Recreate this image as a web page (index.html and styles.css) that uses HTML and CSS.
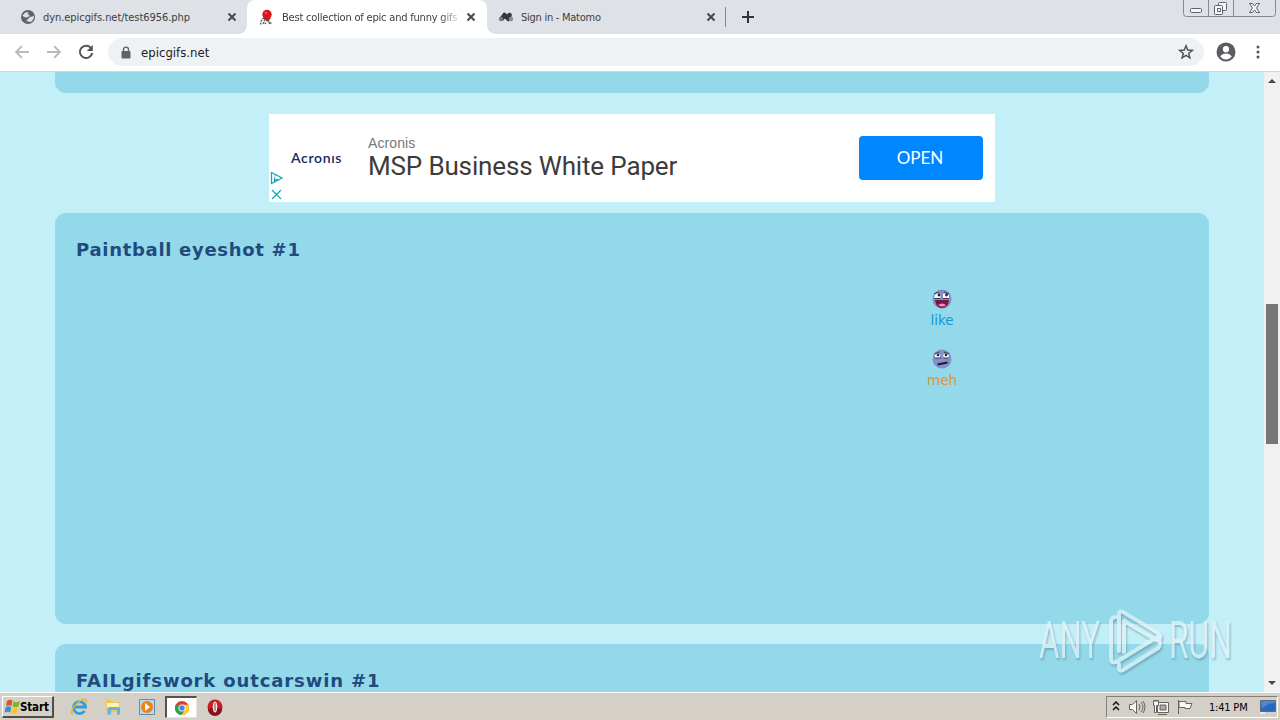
FILE: index.html
```html
<!DOCTYPE html>
<html lang="en">
<head>
  <meta charset="UTF-8">
  <title>Best collection of epic and funny gifs</title>
  <link rel="stylesheet" href="styles.css">
</head>
<body>
  <div class="screen">
    <div class="tabs">
      <div class="tab tab-first">
        <svg class="favicon" viewBox="0 0 16 16"><circle cx="8" cy="8" r="7" fill="#5f6368"/><path d="M2.500 7Q4 3 8.500 3l-1 2 2 1-1 2-3 .5zM10 8l4-1q0 4-3.500 6L6 12l2-2z" fill="#dee1e6"/></svg>
        <span class="tab-title title-php">dyn.epicgifs.net/test6956.php</span>
        <svg class="close" viewBox="0 0 10 10"><path d="M1.500 1.500l7 7M8.500 1.500l-7 7"/></svg>
      </div>
      <div class="tab active">
        <svg class="favicon" viewBox="0 0 16 16"><path d="M2.500 15.500l1-5 3-2 2 3M5 15l1.500-4 3 1 3 3.500M8 15l-2-2M10 11l3.500 4" fill="none" stroke="#586458" stroke-width="1.300" stroke-dasharray="2 1"/><circle cx="9" cy="5.500" r="4.700" fill="#d9141c"/><path d="M5 9l3-2 5 2-3 3-3-1z" fill="#b92225"/><circle cx="8" cy="4" r="1.300" fill="#f0555b"/></svg>
        <span class="tab-title title-gifs">Best collection of epic and funny gifs</span>
        <svg class="close" viewBox="0 0 10 10"><path d="M1.500 1.500l7 7M8.500 1.500l-7 7"/></svg>
      </div>
      <div class="tab tab-last">
        <svg class="favicon" viewBox="0 0 16 16"><path d="M4 9.500L6.500 6l4 4 1-4" fill="none" stroke="#33373c" stroke-width="4.500" stroke-linejoin="round" stroke-linecap="round"/><circle cx="3" cy="10" r="2.200" fill="#777b80"/><circle cx="13" cy="10" r="2.300" fill="#8a8e93"/></svg>
        <span class="tab-title title-matomo">Sign in - Matomo</span>
        <svg class="close" viewBox="0 0 10 10"><path d="M1.500 1.500l7 7M8.500 1.500l-7 7"/></svg>
      </div>
      <svg class="new-tab" viewBox="0 0 12 12"><path d="M6 0v12M0 6h12" stroke="#2f3439" stroke-width="2"/></svg>
      <div class="window-buttons">
        <svg viewBox="0 0 93 17">
          <path d="M.5 0v13.500q0 3 3 3h86q3 0 3-3V0M25.500 0v16M50.500 0v16" fill="none" stroke="#858991"/>
          <g fill="#f5f6f8" stroke="#5c616b"><rect x="7.500" y="8.500" width="11" height="4" rx="1"/><rect x="35.500" y="2.500" width="8" height="8" rx="1"/><rect x="31.500" y="5.500" width="8" height="9" rx="1"/><path d="M34.500 8.500h3v3h-3z"/><path d="M66.500 3.500h3l2 2.500 2-2.500h3l-3 4.500 3 4.500h-3l-2-2.500-2 2.500h-3l3-4.500z"/></g>
        </svg>
      </div>
    </div>

    <div class="toolbar">
      <svg class="nav back" viewBox="0 0 16 16"><path d="M15 8H2M8 2L2 8l6 6"/></svg>
      <svg class="nav forward" viewBox="0 0 16 16"><path d="M1 8h13M8 2l6 6-6 6"/></svg>
      <svg class="nav reload" viewBox="0 0 16 16"><path d="M13.200 4.300A6.200 6.200 0 1 0 14.200 9"/><path d="M14.800 1v6h-6z" class="solid"/></svg>
      <div class="address">
        <svg class="lock" viewBox="0 0 10 13"><path d="M2.500 6V3.600a2.500 2.500 0 0 1 5 0V6" fill="none" stroke="#5f6368" stroke-width="1.400"/><rect x=".5" y="5" width="9" height="7.500" rx="1" fill="#5f6368"/></svg>
        <span class="url">epicgifs.net</span>
        <svg class="star" viewBox="0 0 16 16"><path d="M8 1.800l1.700 4.300 4.600.3-3.600 3 1.200 4.500L8 11.400l-3.900 2.500 1.200-4.500-3.600-3 4.600-.3z"/></svg>
      </div>
      <svg class="profile" viewBox="0 0 20 20"><circle cx="10" cy="10" r="9.500" fill="#5a5e63"/><circle cx="10" cy="7.200" r="3.100" fill="#fff"/><path d="M4.200 14.600c1.300-2.200 3.600-3.100 5.800-3.100s4.500.9 5.800 3.100a7.300 7.300 0 0 1-11.600 0z" fill="#fff"/></svg>
      <svg class="dots" viewBox="0 0 4 14"><circle cx="2" cy="2" r="1.500"/><circle cx="2" cy="7" r="1.500"/><circle cx="2" cy="12" r="1.500"/></svg>
    </div>

    <div class="view">
      <div class="page">
        <div class="card card-top"></div>
        <div class="ad">
          <div class="ad-side">
            <span class="ad-logo">Acron&#305;s</span>
            <svg class="ad-marks" viewBox="0 0 14 30"><path d="M2.500 2.500v11L13 8zM5.500 7.500v3.500l3-2M6 5.500v1M3 20l9 9M12 20l-9 9"/></svg>
          </div>
          <div class="ad-text">
            <span class="ad-brand">Acronis</span>
            <span class="ad-title">MSP Business White Paper</span>
          </div>
          <div class="ad-button">OPEN</div>
        </div>
        <div class="card card-main">
          <h2 class="paintball">Paintball eyeshot #1</h2>
          <div class="votes">
            <div class="vote like">
              <svg viewBox="0 0 20 20"><circle cx="10" cy="10" r="9.500" fill="#858ec4"/><path d="M3 11h14q-1 8-7 8t-7-8z" fill="#741b43"/><path d="M6 16q4-3 8 0-3 3-8 0z" fill="#ef8fbd"/><path d="M2.500 6q2-3 6-1v4h-6zM11 5q4-2 6 1v3h-6z" fill="#fff"/><path d="M2 5l5-2M12 3l5 2M2.500 9.500h6M11 9.500h6" stroke="#343858"/><circle cx="7" cy="6" r="1.400" fill="#182437"/><circle cx="14.500" cy="6" r="1.400" fill="#182437"/></svg>
              <span>like</span>
            </div>
            <div class="vote meh">
              <svg viewBox="0 0 20 20"><circle cx="10" cy="10" r="9.500" fill="#858fca"/><path d="M2.500 6q3-3 6 0l-1 3h-4zM11 6q3-3 6 0l-1 3h-4z" fill="#fff"/><path d="M2.500 5l5-2M12 3l5 2M3 9h6M11.500 9h5" stroke="#343858"/><circle cx="6" cy="6" r="1.300" fill="#182437"/><circle cx="14" cy="6" r="1.300" fill="#182437"/><path d="M5.500 15.500l10-2" stroke="#171d35" stroke-width="2"/></svg>
              <span>meh</span>
            </div>
          </div>
        </div>
        <div class="card card-next">
          <h2 class="failgifs">FAILgifswork outcarswin #1</h2>
        </div>
      </div>
      <div class="scrollbar">
        <svg class="arrow" viewBox="0 0 8 4"><path d="M0 4l4-4 4 4z"/></svg>
        <div class="thumb"></div>
        <svg class="arrow arrow-down" viewBox="0 0 8 4"><path d="M0 0h8L4 4z"/></svg>
      </div>
    </div>

    <div class="taskbar">
      <div class="start">
        <svg viewBox="0 0 16 16"><path d="M3 2q3-2 5.500-.5L7.500 7Q5 5.500 2 7z" fill="#e55224"/><path d="M9.500 2.500q3 1.500 6.500-.5l-1.500 5.500Q12 9 8.500 7.500z" fill="#77b82a"/><path d="M1.800 8Q5 6.500 7.200 8l-1 5.500Q4 12 .5 13.500z" fill="#328fdd"/><path d="M8.300 8.500q3 1.500 6 0L13 14q-3 1.500-6 0z" fill="#fac52d"/></svg>
        <span>Start</span>
      </div>
      <div class="apps">
        <div class="app"><svg viewBox="0 0 18 18"><path d="M14.500 13a6 6 0 1 1 1-4H5" fill="none" stroke="#319ed8" stroke-width="2.800"/><path d="M3 16.500C-3 14 11-1 15.500 1.500q2 1 0 4" fill="none" stroke="#e8b927" stroke-width="1.500"/></svg></div>
        <div class="app"><svg viewBox="0 0 18 18"><path d="M2 2h5l1 2h8v10H2z" fill="#edc55a"/><path d="M3 5h12v5H3z" fill="#fff2a9"/><path d="M3.500 16.500V11q0-2 2-2H14q2 0 2 2v5.500h-3V12H7v4.500z" fill="#62b4d8"/></svg></div>
        <div class="app"><svg viewBox="0 0 18 18"><path d="M1.500 1.500h15v15h-15z" fill="#b6d9ee" stroke="#5c8db5"/><circle cx="9" cy="9" r="6" fill="#ef8215"/><path d="M7 5l5 4-5 4z" fill="#fff"/></svg></div>
        <div class="app pressed"><svg viewBox="0 0 18 18"><circle cx="9" cy="9" r="7" fill="#e43c31"/><path d="M9 9L2.900 5.500A7 7 0 0 0 8 16l4-6z" fill="#29a052"/><path d="M9 5.700h6.200A7 7 0 0 1 8.300 16L12 11z" fill="#ffcb27"/><circle cx="9" cy="9" r="3.500" fill="#fff"/><circle cx="9" cy="9" r="2.700" fill="#4286e9"/></svg></div>
        <div class="app"><svg viewBox="0 0 18 18"><circle cx="9" cy="9" r="7.500" fill="#c71d23"/><path d="M2 11a7 7 0 0 0 14 0q-7-3-14 0z" fill="#86131a"/><ellipse cx="9" cy="9" rx="2.300" ry="5.500" fill="#eee"/><path d="M9 5v8" stroke="#bb292d"/></svg></div>
      </div>
      <div class="tray">
        <svg class="tray-icons" viewBox="0 0 84 20">
          <path d="M1 8l3-3 3 3M1 13l3-3 3 3" fill="none" stroke="#111" stroke-width="1.500"/>
          <g fill="#f8f8f5" stroke="#66645f"><path d="M17.500 7.500h3l4-4v13l-4-4h-3z"/><path d="M27 7q2 3 0 6M29 5q4 5 0 10M31 4q4 6 0 12" fill="none"/><path d="M45.500 5.500h11v10h-11z"/><path d="M48 8h6v5h-6z" fill="#aaa"/><path d="M41.500 3.500h5v5h-2v7h-2v-7h-1zM43 3v2M45 3v2M46 17.500h9"/><path d="M66.500 17V3M67 4.500h7v2h6l-2 5h-5v-1h-6z"/></g>
        </svg>
        <span class="clock">1:41 PM</span>
        <svg class="desktop" viewBox="0 0 16 14"><path d="M.5.500h15v11H.5z" fill="#2868bd" stroke="#5a6d85"/><path d="M2 9Q8 3 15 3V1H1z" fill="#5087d0"/><path d="M0 12h5v2H0z" fill="#d6edff"/></svg>
      </div>
    </div>

    <svg class="watermark" viewBox="0 0 210 76">
      <text x="3" y="53" textLength="61" lengthAdjust="spacingAndGlyphs">ANY</text>
      <text x="133" y="53" textLength="63" lengthAdjust="spacingAndGlyphs">RUN</text>
      <path d="M83 46V9q0-4 4-2l35 21q4 3 1 6l-3 1L88 16v31M80 12q-5 0-5 5v36q0 7 7 3l41-25M83 59v4q0 4 4 2l35-22q3-3 1-8"/>
    </svg>
  </div>
</body>
</html>
```

FILE: styles.css
```css
* {
  box-sizing: border-box;
}
body {
  margin: 0;
  overflow: hidden;
  font-family: "DejaVu Sans Condensed", "DejaVu Sans", sans-serif;
}
svg {
  display: block;
  flex: none;
}
.screen {
  position: relative;
  width: 1280px;
  height: 720px;
  display: flex;
  flex-direction: column;
}
/* browser tabs */
.tabs {
  height: 34px;
  flex: none;
  display: flex;
  background: #dee1e6;
}
.tab {
  display: flex;
  align-items: center;
  width: 240px;
  height: 34px;
  padding: 0 11px;
  font-size: 11px;
  color: #3c4043;
}
.tab-first {
  width: 247px;
  padding: 0 10px 0 20px;
}
.active {
  position: relative;
  background: #fff;
  border-radius: 8px 8px 0 0;
}
.active::before,
.active::after {
  content: "";
  position: absolute;
  bottom: 0;
  left: -8px;
  width: 8px;
  height: 8px;
  background: radial-gradient(circle at 0 0, transparent 7.5px, #fff 8px);
}
.active::after {
  left: auto;
  right: -8px;
  background: radial-gradient(circle at 100% 0, transparent 7.5px, #fff 8px);
}
.tab-last {
  background: linear-gradient(#858991, #858991) right 1px center / 1px 20px no-repeat;
}
.favicon {
  width: 16px;
  height: 16px;
  margin-right: 7px;
}
.active .favicon {
  margin-right: 8px;
}
.tab-title {
  flex: 1;
  white-space: nowrap;
  overflow: hidden;
}
.title-php {
  letter-spacing: -0.06px;
}
.title-gifs {
  margin-right: 4px;
  letter-spacing: -0.2px;
  -webkit-mask-image: linear-gradient(90deg, #000 88%, transparent);
  mask-image: linear-gradient(90deg, #000 88%, transparent);
}
.title-matomo {
  letter-spacing: -0.26px;
}
.close {
  width: 10px;
  height: 10px;
  fill: none;
  stroke: #45494e;
  stroke-width: 2;
}
.new-tab {
  width: 12px;
  height: 12px;
  margin: 11px 0 0 15px;
}
.window-buttons {
  width: 93px;
  height: 17px;
  margin: 0 4px 0 auto;
}
/* toolbar */
.toolbar {
  height: 38px;
  flex: none;
  display: flex;
  align-items: center;
  padding: 0 20px 1px 14px;
  background: #fff;
  border-bottom: 1px solid #c5dce1;
}
.nav {
  width: 16px;
  height: 16px;
  margin-right: 16px;
  fill: none;
  stroke: #b8babd;
  stroke-width: 1.8;
}
.reload {
  margin-right: 14px;
  stroke: #505459;
  stroke-width: 2;
}
.reload .solid {
  fill: #505459;
  stroke: none;
}
.address {
  width: 1096px;
  height: 28px;
  display: flex;
  align-items: center;
  padding: 0 10px 0 13px;
  border-radius: 14px;
  background: #eff2f5;
}
.lock {
  width: 10px;
  height: 13px;
  margin-right: 10px;
}
.url {
  font-size: 13px;
  letter-spacing: 0.02px;
  color: #202124;
}
.star {
  width: 16px;
  height: 16px;
  margin-left: auto;
  fill: none;
  stroke: #50555b;
  stroke-width: 1.5;
}
.profile {
  width: 20px;
  height: 20px;
  margin: 0 auto 0 12px;
}
.dots {
  width: 4px;
  height: 14px;
  fill: #50555b;
}
/* web page */
.view {
  height: 620px;
  flex: none;
  display: flex;
}
.page {
  width: 1264px;
  height: 620px;
  overflow: hidden;
  padding: 0 55px;
  background: #c3eff9;
}
.card {
  background: #94d9ea;
  border-radius: 11px;
}
.card-top {
  height: 21px;
  border-radius: 0 0 11px 11px;
}
.ad {
  width: 726px;
  height: 88px;
  margin: 21px 0 11px 214px;
  display: flex;
  padding-right: 12px;
  background: #fff;
}
.ad-side {
  width: 99px;
  display: flex;
  flex-direction: column;
}
.ad-logo {
  height: 56px;
  padding: 35px 0 0 22px;
  font-family: Lato, sans-serif;
  font-size: 14px;
  line-height: 18px;
  font-weight: 600;
  letter-spacing: 0.65px;
  color: #102b5b;
}
.ad-marks {
  width: 14px;
  height: 30px;
  fill: none;
  stroke: #18a5b9;
  stroke-width: 1.3;
}
.ad-text {
  display: flex;
  flex-direction: column;
  flex: 1;
  padding-top: 20px;
}
.ad-brand {
  font-family: "Liberation Sans", sans-serif;
  font-size: 14px;
  line-height: 18px;
  letter-spacing: 0.1px;
  color: #777;
}
.ad-title {
  font-family: Roboto, sans-serif;
  font-size: 26px;
  line-height: 28px;
  letter-spacing: -0.15px;
  color: #3c3c3c;
}
.ad-button {
  width: 124px;
  height: 44px;
  margin-top: 22px;
  padding-right: 2px;
  border-radius: 4px;
  background: #0087ff;
  color: #fff;
  font-family: Lato, sans-serif;
  font-size: 17px;
  line-height: 44px;
  text-align: center;
}
.card-main {
  height: 411px;
  padding: 25px 21px 0;
}
h2 {
  margin: 0;
  font-family: "DejaVu Sans", sans-serif;
  font-size: 18px;
  line-height: 24px;
  white-space: nowrap;
  color: #214b7e;
}
.paintball {
  letter-spacing: 0.7px;
}
.failgifs {
  letter-spacing: 0.87px;
}
.votes {
  display: flex;
  flex-direction: column;
  gap: 20px;
  width: 60px;
  margin: 27px 0 0 836px;
}
.vote {
  display: flex;
  flex-direction: column;
  align-items: center;
  height: 40px;
  font-family: "DejaVu Sans", sans-serif;
  font-size: 13.5px;
  line-height: 20px;
}
.vote svg {
  width: 20px;
  height: 20px;
}
.vote span {
  margin-top: 1px;
}
.like {
  color: #1299dc;
}
.meh {
  color: #dc943e;
}
.card-next {
  height: 100px;
  margin-top: 20px;
  padding: 25px 21px 0;
}
.scrollbar {
  width: 16px;
  height: 620px;
  display: flex;
  flex-direction: column;
  align-items: center;
  background: #f1f1f1;
}
.arrow {
  width: 8px;
  height: 4px;
  margin-top: 7px;
  fill: #43484b;
}
.thumb {
  width: 12px;
  height: 140px;
  margin-top: 221px;
  background: #777;
}
.arrow-down {
  margin: auto 0 7px;
}
/* taskbar */
.taskbar {
  height: 28px;
  flex: none;
  display: flex;
  padding: 3px 2px 1px;
  background: #d4d0c8;
  border-top: 1px solid #fff;
}
.start {
  display: flex;
  align-items: center;
  width: 52px;
  height: 22px;
  border: 1px solid #fff;
  border-right: 2px solid #504e4b;
  border-bottom: 2px solid #504e4b;
  font-size: 11.5px;
  font-weight: bold;
  letter-spacing: -0.15px;
}
.start svg {
  width: 16px;
  height: 16px;
  margin: 0 0 0 1px;
}
.apps {
  display: flex;
  margin-left: 9px;
  gap: 2px;
}
.app {
  width: 32px;
  height: 22px;
  display: flex;
  justify-content: center;
  align-items: center;
}
.app svg {
  width: 18px;
  height: 18px;
}
.pressed {
  background: #fff;
  border: 1px solid #e8e5df;
  border-top: 2px solid #55524e;
  border-left: 2px solid #55524e;
}
.tray {
  display: flex;
  align-items: center;
  width: 172px;
  height: 22px;
  margin-left: auto;
  border: 1px solid #fff;
  border-top-color: #85817a;
  border-left-color: #85817a;
}
.tray-icons {
  width: 84px;
  height: 20px;
  margin-left: 5px;
}
.clock {
  margin-left: 13px;
  font-size: 11px;
  letter-spacing: -0.2px;
  white-space: nowrap;
}
.desktop {
  width: 16px;
  height: 14px;
  margin: 0 1px 0 auto;
}
.watermark {
  position: absolute;
  left: 1036px;
  top: 605px;
  width: 210px;
  height: 76px;
  overflow: visible;
  opacity: 0.7;
  filter: drop-shadow(1px 2px 1px rgba(69, 120, 133, 0.65));
}
.watermark text {
  font-family: Roboto, sans-serif;
  font-size: 51px;
  font-weight: 400;
  fill: #e4f4f7;
}
.watermark path {
  fill: none;
  stroke: #e4f4f7;
  stroke-width: 4;
  stroke-linecap: round;
  stroke-linejoin: round;
}
```
